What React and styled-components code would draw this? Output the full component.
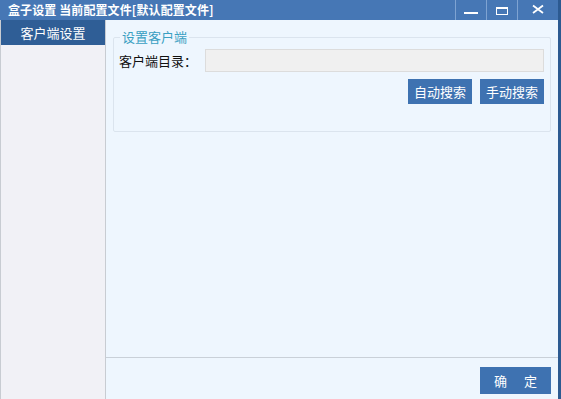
import React from 'react';
import styled, {createGlobalStyle} from 'styled-components';

const Global = createGlobalStyle `
  html, body {
    margin: 0;
    padding: 0;
    background: #ffffff;
  }
  body {
    font-family: "Noto Sans CJK SC", "Liberation Sans", sans-serif;
    font-size: 12px;
  }
`

const Window = styled.div `
  width: 561px;
  height: 399px;
  display: flex;
  flex-direction: column;
  box-sizing: border-box;
  border-right: 3px solid #2c5a91;
  background: #eef6fe;
  overflow: hidden;
`

const TitleBar = styled.header `
  height: 20px;
  background: #4677b5;
  display: flex;
  align-items: center;
  color: #ffffff;
`

const Title = styled.h1 `
  flex: 1;
  margin: 0;
  padding-left: 8px;
  font-size: 12px;
  font-weight: 700;
  line-height: 20px;
  letter-spacing: 0.1px;
`

const Ctrl = styled.button `
  width: ${p => p.w || 31}px;
  height: 20px;
  padding: 0;
  border: 0;
  border-left: 1px solid #7ea3d2;
  background: transparent;
  display: flex;
  align-items: center;
  justify-content: center;
`

const Body = styled.div `
  flex: 1;
  display: flex;
  min-height: 0;
`

const Sidebar = styled.nav `
  width: 104px;
  border-left: 1px solid #c8ccd2;
  border-right: 1px solid #c8ccd2;
  background: #f1f1f6;
`

const NavItem = styled.div `
  height: 25px;
  line-height: 25px;
  text-align: center;
  color: ${p => p.active ? '#ffffff' : '#222'};
  background: ${p => p.active ? '#2f5e96' : 'transparent'};
  font-size: 13px;
`

const Main = styled.main `
  flex: 1;
  display: flex;
  flex-direction: column;
`

const Content = styled.div `
  flex: 1;
  padding: 10px 7px 0 7px;
`

const Group = styled.fieldset `
  margin: 0;
  padding: 5px 6px 27px 5px;
  border: 1px solid #dbe4ee;
  border-radius: 2px;
`

const Legend = styled.legend `
  color: #3a9fc2;
  font-size: 13px;
  padding: 0 2px;
  margin-left: 1px;
  line-height: 14px;
`

const Row = styled.div `
  display: flex;
  align-items: center;
  justify-content: ${p => p.end ? 'flex-end' : 'flex-start'};
  gap: 8px;
  margin-top: ${p => p.gap || 0}px;
`

const Label = styled.label `
  flex: 0 0 77px;
  white-space: nowrap;
  color: #111;
  font-size: 13px;
`

const Input = styled.div `
  flex: 1;
  height: 21px;
  background: #f0f0f0;
  border: 1px solid #dcdcdc;
`

const Btn = styled.button `
  width: ${p => p.w || 64}px;
  height: ${p => p.h || 25}px;
  border: 0;
  padding: 0;
  background: #3e72b1;
  color: #ffffff;
  font-family: inherit;
  font-size: 13px;
  word-spacing: ${p => p.spaced ? '14px' : '0'};
`

const Footer = styled.footer `
  box-sizing: border-box;
  height: 42px;
  border-top: 1px solid #c9d0d8;
  display: flex;
  align-items: center;
  justify-content: flex-end;
  padding: 4px 7px 0 0;
`

const App = () => (
  <Window>
    <Global/>
    <TitleBar>
      <Title>盒子设置 当前配置文件[默认配置文件]</Title>
      <Ctrl aria-label="minimize">
        <svg width="16" height="14" viewBox="0 0 16 14"><rect x="1" y="9" width="14" height="2" fill="#fff"/></svg>
      </Ctrl>
      <Ctrl aria-label="maximize">
        <svg width="14" height="14" viewBox="0 0 14 14"><rect x="1.5" y="4.5" width="11" height="7" fill="none" stroke="#fff" strokeWidth="1"/><rect x="1" y="4" width="12" height="2" fill="#fff"/></svg>
      </Ctrl>
      <Ctrl w={41} aria-label="close">
        <svg width="14" height="14" viewBox="0 0 14 14"><path d="M2 2.5 L12 10 M12 2.5 L2 10" stroke="#fff" strokeWidth="1.8"/></svg>
      </Ctrl>
    </TitleBar>
    <Body>
      <Sidebar>
        <NavItem active>客户端设置</NavItem>
      </Sidebar>
      <Main>
        <Content>
          <Group>
            <Legend>设置客户端</Legend>
            <Row>
              <Label>客户端目录：</Label>
              <Input/>
            </Row>
            <Row end gap={7}>
              <Btn>自动搜索</Btn>
              <Btn>手动搜索</Btn>
            </Row>
          </Group>
        </Content>
        <Footer>
          <Btn w={71} h={27} spaced>确 定</Btn>
        </Footer>
      </Main>
    </Body>
  </Window>
);

export default App;
